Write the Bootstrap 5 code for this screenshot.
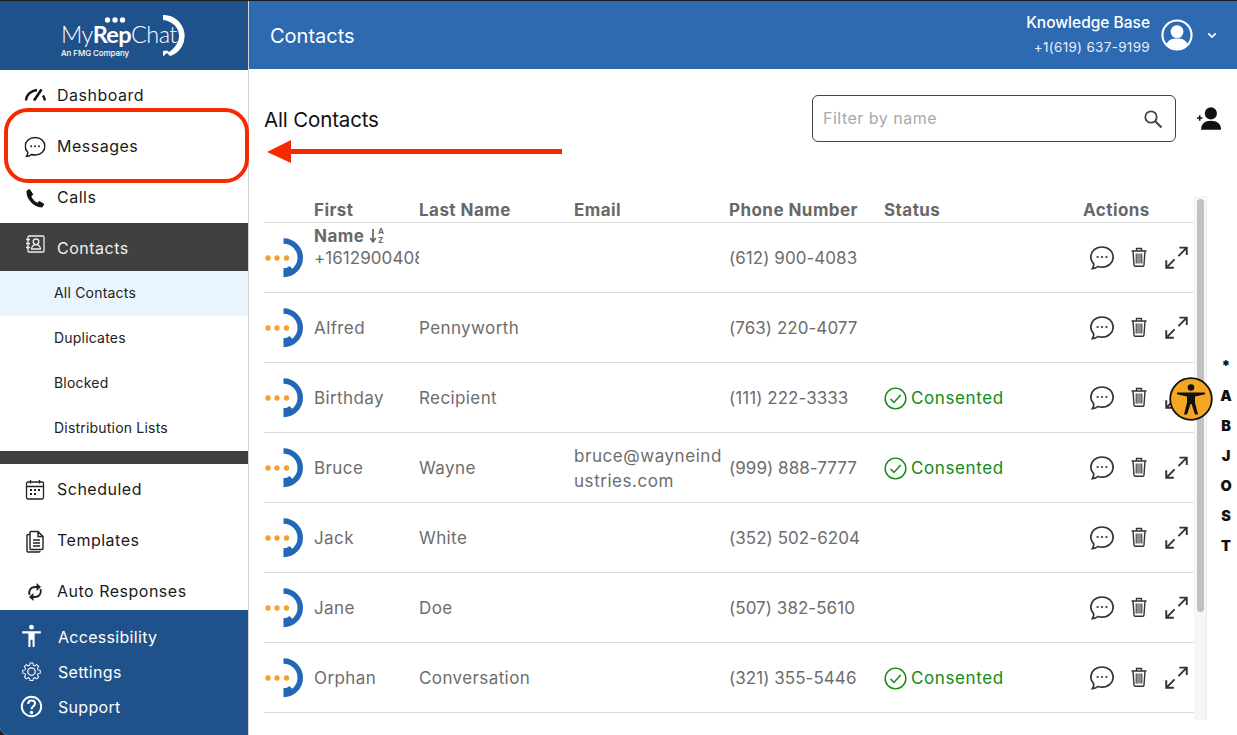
<!DOCTYPE html>
<html lang="en"><head><meta charset="utf-8"><title>Contacts</title>
<link href="https://cdn.jsdelivr.net/npm/bootstrap@5.3.0/dist/css/bootstrap.min.css" rel="stylesheet">
<style>
html,body{height:100%;overflow:hidden}
body{background:#1c1c1c;font-family:Inter,"Liberation Sans",sans-serif;padding-top:1px}
.shell{height:734px;background:#fff;border-bottom-left-radius:8px;position:relative;overflow:hidden}
.side{width:249px;flex:none;border-right:1px solid #d4d4d4}
.logo-area{height:69px;background:#1f518b;color:#fff;padding-left:61px}
.logo-block{width:111px;margin-top:7px;position:relative;flex:none}
.logo-dots{position:absolute;left:43px;top:-4px}
.logo-word{font-family:Lato,sans-serif;font-size:23.500px;font-weight:300;letter-spacing:-.6px;line-height:28px;white-space:nowrap}
.logo-word b{font-weight:700}
.logo-sub{font-size:8px;font-weight:500;line-height:9px;margin-top:1.500px;letter-spacing:-.1px}
.logo-arc{margin-left:-9px;flex:none}
.side-nav{height:540px;overflow:hidden}
.nav-line{height:51px;padding-left:23px;padding-bottom:2px;gap:10px;color:#1b1b1b;font-size:16px;letter-spacing:.5px;text-decoration:none}
.nav-line svg{width:24px;height:24px;flex:none;margin-top:2px}
.nav-cur{height:48px;background:#404040;color:#f1f1f1;padding-top:2px;padding-bottom:0}
.nav-cur svg{margin-top:-6px}
.sub-line{height:45px;padding-left:54px;padding-bottom:2px;font-size:14px;letter-spacing:.2px;color:#222;text-decoration:none}
.sub-cur{background:#e9f4fd}
.dark-strip{height:13px;background:#404040}
.side-foot{height:125px;background:#1f518b;padding-top:9px}
.foot-line{height:35px;padding-left:19px;gap:14px;color:#fff;font-size:16px;letter-spacing:.3px;text-decoration:none}
.foot-line svg{width:25px;height:25px;flex:none}
.top-bar{height:68px;background:#2d6ab1;color:#fff;padding:0 20px 0 21px}
.top-title{font-size:20px;font-weight:400;padding-top:2px}
.top-name{font-size:15.500px;font-weight:500;line-height:24px}
.top-phone{font-size:13.500px;line-height:24px;color:#e6eef7;letter-spacing:.3px}
.top-ava{margin-left:11px}
.top-caret{margin-left:14px}
.head-row{margin-top:26px;padding:0 15px;height:47px}
.page-title{font-size:20.500px;color:#111;margin:0;font-weight:400;letter-spacing:-.15px;padding-top:4px}
.find-box{width:364px;height:47px;border:1px solid #444;border-radius:6px;padding:0 12px 0 10px}
.find-box input{border:0;outline:0;flex:1;font:16px Inter,sans-serif;letter-spacing:.5px;min-width:0;background:transparent;padding:0 0 2px}
.find-box input::placeholder{color:#a9a9a9}
.add-btn{margin-left:20px}
.list-area{margin-top:54px;height:524px;overflow:hidden;padding-left:15px}
.list-wrap{width:930px;flex:none}
.ct{table-layout:fixed;width:930px;border-collapse:collapse;color:#6d6d6d;font-size:17px;letter-spacing:.4px}
.ct th{height:26px;vertical-align:top;border-bottom:1px solid #dcdcdc;font-weight:700;font-size:17px;color:#686868;letter-spacing:.45px;padding:0}
.ct th div{height:25px;line-height:26px;overflow:visible;padding-top:1px}
.ct td{height:70px;border-bottom:1px solid #dcdcdc;padding:2px 0 0;vertical-align:middle;line-height:25px}
.ct td.clip{overflow:hidden;white-space:nowrap}
.ct td.mail{word-break:break-all;padding:4px 0 0;letter-spacing:.55px}
.ct td.tel{letter-spacing:.05px;white-space:nowrap}
.ct td.av{padding-top:2px}
.ok{color:#128a12;gap:4px;letter-spacing:.6px}
.ok svg{width:23px;height:23px}
.ct td.acts{padding:1px 0 0 7px;color:#333}
.rail{width:13px;flex:none;background:#f6f6f6;border-right:1px solid #ececec;padding:3px 2px 0 3px}
.rail-thumb{height:413px;background:#c1c1c1;border-radius:4px}
.alpha{width:22px;margin-left:8px;font-weight:900;font-size:14.500px;color:#111;line-height:30px;text-align:center;padding-top:155px}
.note-ring{position:absolute;left:4px;top:107px;width:245px;height:75px;border:4px solid #f52a00;border-radius:24px}
.note-arrow{position:absolute;left:267px;top:138px}
.a11y{position:absolute;left:1169px;top:376px;width:44px;height:44px}
</style></head>
<body>
<svg width="0" height="0" class="position-absolute">
<symbol id="i-avatar" viewBox="0 0 40 40"><circle cx="4" cy="20" r="2.700" fill="#f5a02a"/><circle cx="13" cy="20" r="2.700" fill="#f5a02a"/><circle cx="22.500" cy="20" r="2.700" fill="#f5a02a"/><path d="M19.500 3A16.500 16.500 0 0 1 19.500 36.500" fill="none" stroke="#2367b7" stroke-width="5.500"/><path d="M19.500 30h3l3-2 3 3-5 3.500h-4z" fill="#2367b7"/></symbol>
<symbol id="i-chat" viewBox="0 0 24 24"><path d="M12 1C5.600 1 .8 5.400.8 11c0 2.700 1.100 5 2.900 6.800.2 1.700-.3 3.300-1.300 4.900 2.300-.2 4.200-1 5.500-2.200 1.300.4 2.700.6 4.100.6 6.400 0 11.200-4.500 11.200-10.100S18.400 1 12 1z" fill="none" stroke="currentColor" stroke-width="1.700"/><circle cx="7.600" cy="11" r="1.100" fill="currentColor"/><circle cx="12" cy="11" r="1.100" fill="currentColor"/><circle cx="16.400" cy="11" r="1.100" fill="currentColor"/></symbol>
<symbol id="i-trash" viewBox="0 0 16 20"><path d="M.5 4h15M5.500 3.800V1.500h5v2.300M2 4l1 14c0 .7.500 1.300 1.300 1.300h7.400c.8 0 1.300-.6 1.300-1.300l1-14" fill="none" stroke="currentColor" stroke-width="1.400"/><path d="M5.200 6.500v10M7 6.500v10M9 6.500v10M10.800 6.500v10" stroke="currentColor" stroke-width="1.100"/></symbol>
<symbol id="i-expand" viewBox="0 0 24 24"><path d="M14 10.500 22.500 2M15 1.700h7.700v7.700M10 14l-8.500 8.500M1.300 14.800v7.900h7.900" fill="none" stroke="currentColor" stroke-width="2"/></symbol>
<symbol id="i-check" viewBox="0 0 24 24"><circle cx="12" cy="12" r="10.800" fill="none" stroke="currentColor" stroke-width="1.500"/><path d="M6.800 12.500l3.600 3.600 7-7.800" fill="none" stroke="currentColor" stroke-width="1.600"/></symbol>
<symbol id="i-acts" viewBox="0 0 98 24"><use href="#i-chat" width="24" height="24" x="0" y="0"/><use href="#i-trash" width="16" height="20" x="41" y="1"/><use href="#i-expand" width="23" height="23" x="75" y="0"/></symbol>
</svg>
<div class="shell d-flex">
<aside class="side d-flex flex-column">
  <div class="logo-area d-flex align-items-center">
    <div class="logo-block">
      <svg class="logo-dots" width="22" height="8" viewBox="0 0 22 8"><circle cx="3.500" cy="4" r="2.700" fill="#fff"/><circle cx="11" cy="4" r="2.700" fill="#fff"/><circle cx="18.500" cy="4" r="2.700" fill="#fff"/></svg>
      <div class="logo-word">My<b>Rep</b>Chat</div>
      <div class="logo-sub">An FMG Company</div>
    </div>
    <svg class="logo-arc" width="23" height="42" viewBox="0 0 23 42"><path d="M0 0A21 21 0 0 1 7 41l-3-3-4 3.500V36l4-.5 2 1.500C12 33 16 27 16 21 16 12 9 6 0 5z" fill="#fff"/></svg>
  </div>
  <nav class="side-nav">
    <a class="nav-line d-flex align-items-center" href="#"><svg viewBox="0 0 24 24" fill="none" stroke="#111" stroke-width="2.300"><path d="M3 16.500C3 11 8 6.500 14 6"/><path d="M11 16.500 18.500 5.500" stroke-width="2.600"/><path d="M20 11.500c1 1.500 1.500 3 2 5"/></svg><span>Dashboard</span></a>
    <a class="nav-line d-flex align-items-center" href="#"><svg viewBox="0 0 24 24" color="#1b1b1b"><g transform="translate(1.500 1.500) scale(.88)"><use href="#i-chat" width="24" height="24"/></g></svg><span>Messages</span></a>
    <a class="nav-line d-flex align-items-center" href="#"><svg viewBox="0 0 24 24"><path d="M6.500 3.500 4 5c-.6 7.500 6.500 16 15.200 16l1.500-3-4.400-2.500-2 1.700c-2.800-1-5.500-4.500-6.500-7l2-1.700z" fill="#111" stroke="#111" stroke-width="1" stroke-linejoin="round"/></svg><span>Calls</span></a>
    <a class="nav-line nav-cur d-flex align-items-center" href="#"><svg viewBox="0 0 24 24" fill="none" stroke="#eee" stroke-width="1.300"><rect x="5" y="3" width="16" height="16" rx="1"/><circle cx="13" cy="8.800" r="2.800"/><path d="M8.500 16c.5-3 2-4.300 4.500-4.300s4 1.300 4.500 4.300zM3 6.500h4M3 10.500h4M3 14.500h4"/></svg><span>Contacts</span></a>
    <a class="sub-line sub-cur d-flex align-items-center" href="#">All Contacts</a>
    <a class="sub-line d-flex align-items-center" href="#">Duplicates</a>
    <a class="sub-line d-flex align-items-center" href="#">Blocked</a>
    <a class="sub-line d-flex align-items-center" href="#">Distribution Lists</a>
    <div class="dark-strip"></div>
    <a class="nav-line d-flex align-items-center" href="#"><svg viewBox="0 0 24 24" fill="none" stroke="#222" stroke-width="1.300"><rect x="3.500" y="4" width="17" height="17" rx="1.500"/><path d="M3.500 8.500h17M7.500 2v3.500M16.500 2v3.500"/><path d="M7 12h2M11 12h2M15 12h2M7 16h2M11 16h2" stroke-width="1.800"/></svg><span>Scheduled</span></a>
    <a class="nav-line d-flex align-items-center" href="#"><svg viewBox="0 0 24 24" fill="none" stroke="#222" stroke-width="1.400"><path d="M8 2.500h7l5 5v12c0 .7-.5 1-1 1H8c-.5 0-1-.3-1-1V3.500c0-.7.500-1 1-1zM15 2.500v5h5M10 11h7M10 14h7M10 17h7"/><path d="M7 5.500H5c-.5 0-1 .3-1 1V22c0 .7.500 1 1 1h11c.6 0 1-.4 1-1"/></svg><span>Templates</span></a>
    <a class="nav-line d-flex align-items-center" href="#"><svg viewBox="0 0 24 24" fill="none" stroke="#222" stroke-width="1.900"><path d="M6.500 15C5.300 11 7.500 7 12 7h2"/><path d="M17.500 9C18.700 13 16.500 17 12 17h-2"/><path d="M13.500 3l4.500 4-4.500 4z M10.500 13 6 17l4.500 4z" fill="#222" stroke="none"/></svg><span>Auto Responses</span></a>
  </nav>
  <div class="side-foot">
    <a class="foot-line d-flex align-items-center" href="#"><svg viewBox="0 0 24 24" fill="#fff"><circle cx="12" cy="3" r="2.300"/><path d="M3 7h18v2.200H15V22h-2v-7h-2v7H9V9.200H3z"/></svg><span>Accessibility</span></a>
    <a class="foot-line d-flex align-items-center" href="#"><svg viewBox="0 0 24 24" fill="none" stroke="#fff" stroke-width="1.200"><circle cx="12" cy="12" r="3.600"/><path d="M10.300 2.500h3.400l.5 2.700 1.700.7 2.300-1.500 2.400 2.400-1.500 2.300.7 1.700 2.700.5v3.400l-2.700.5-.7 1.700 1.500 2.300-2.400 2.400-2.300-1.500-1.700.7-.5 2.700h-3.400l-.5-2.700-1.700-.7-2.300 1.500-2.400-2.400 1.500-2.300-.7-1.700-2.700-.5v-3.400l2.700-.5.7-1.700-1.500-2.300 2.400-2.400 2.300 1.500 1.700-.7z" transform="translate(12 12) scale(.8) translate(-12 -12.700)"/></svg><span>Settings</span></a>
    <a class="foot-line d-flex align-items-center" href="#"><svg viewBox="0 0 24 24" fill="none" stroke="#fff" stroke-width="1.900"><circle cx="12" cy="12" r="9.300"/><path d="M8.800 9.500c0-2 1.400-3.300 3.300-3.300 2 0 3.300 1.300 3.300 3 0 2.800-3.400 2.600-3.400 5.500" /><circle cx="12" cy="17.800" r=".7" fill="#fff"/></svg><span>Support</span></a>
  </div>
</aside>
<main class="flex-grow-1 d-flex flex-column" style="min-width:0">
  <header class="top-bar d-flex align-items-center justify-content-between">
    <div class="top-title">Contacts</div>
    <div class="d-flex align-items-center">
      <div class="text-end"><div class="top-name">Knowledge Base</div><div class="top-phone">+1(619) 637-9199</div></div>
      <svg class="top-ava" width="32" height="32" viewBox="0 0 33 33"><circle cx="16.500" cy="16.500" r="15" fill="none" stroke="#fff" stroke-width="2.200"/><circle cx="16.500" cy="13" r="6.600" fill="#fff"/><path d="M5.500 26.500c1-4.500 5-6.500 11-6.500s10 2 11 6.500c-3 3-7 4.500-11 4.500s-8-1.500-11-4.500z" fill="#fff"/></svg>
      <svg class="top-caret" width="10" height="7" viewBox="0 0 12 8"><path d="M1.500 1.500 6 6l4.500-4.500" fill="none" stroke="#fff" stroke-width="2"/></svg>
    </div>
  </header>
  <div class="head-row d-flex align-items-center">
    <h1 class="page-title flex-grow-1">All Contacts</h1>
    <div class="find-box d-flex align-items-center">
      <input type="text" placeholder="Filter by name" aria-label="Filter by name">
      <svg width="20" height="20" viewBox="0 0 20 20"><circle cx="8" cy="8" r="5.700" fill="none" stroke="#444" stroke-width="1.800"/><path d="m12.500 12.500 6 6" stroke="#444" stroke-width="2.200"/></svg>
    </div>
    <svg class="add-btn" width="26" height="25" viewBox="0 0 28 26"><circle cx="16" cy="7.500" r="6.500" fill="#111"/><path d="M5.500 25c0-6.500 4-9.500 10.500-9.500S27 18.500 27 25z" fill="#111"/><path d="M1 12.500h6M4 9.500v6" stroke="#111" stroke-width="1.700"/></svg>
  </div>
  <div class="list-area d-flex">
    <div class="list-wrap">
      <table class="ct">
        <colgroup><col style="width:50px"><col style="width:105px"><col style="width:155px"><col style="width:155px"><col style="width:155px"><col style="width:199px"><col></colgroup>
        <thead><tr><th></th><th><div>First<br>Name <svg width="17" height="17" viewBox="0 0 17 17" style="vertical-align:-2px"><path d="M4 2v12M1.200 11 4 14.800 6.800 11" fill="none" stroke="#686868" stroke-width="1.700"/><text x="9" y="7" font-size="8" font-weight="700" fill="#686868" letter-spacing="0">A</text><text x="9" y="15.500" font-size="8" font-weight="700" fill="#686868" letter-spacing="0">Z</text></svg></div></th><th><div>Last Name</div></th><th><div>Email</div></th><th><div>Phone Number</div></th><th><div>Status</div></th><th><div>Actions</div></th></tr></thead>
        <tbody>
        <tr><td class="av"><svg width="40" height="40"><use href="#i-avatar"/></svg></td><td class="clip tel">+16129004083</td><td></td><td></td><td class="tel">(612) 900-4083</td><td></td><td class="acts"><svg class="d-block" width="98" height="24"><use href="#i-acts"/></svg></td></tr>
        <tr><td class="av"><svg width="40" height="40"><use href="#i-avatar"/></svg></td><td>Alfred</td><td>Pennyworth</td><td></td><td class="tel">(763) 220-4077</td><td></td><td class="acts"><svg class="d-block" width="98" height="24"><use href="#i-acts"/></svg></td></tr>
        <tr><td class="av"><svg width="40" height="40"><use href="#i-avatar"/></svg></td><td>Birthday</td><td>Recipient</td><td></td><td class="tel">(111) 222-3333</td><td><div class="ok d-flex align-items-center"><svg><use href="#i-check"/></svg>Consented</div></td><td class="acts"><svg class="d-block" width="98" height="24"><use href="#i-acts"/></svg></td></tr>
        <tr><td class="av"><svg width="40" height="40"><use href="#i-avatar"/></svg></td><td>Bruce</td><td>Wayne</td><td class="mail">bruce@wayneindustries.com</td><td class="tel">(999) 888-7777</td><td><div class="ok d-flex align-items-center"><svg><use href="#i-check"/></svg>Consented</div></td><td class="acts"><svg class="d-block" width="98" height="24"><use href="#i-acts"/></svg></td></tr>
        <tr><td class="av"><svg width="40" height="40"><use href="#i-avatar"/></svg></td><td>Jack</td><td>White</td><td></td><td class="tel">(352) 502-6204</td><td></td><td class="acts"><svg class="d-block" width="98" height="24"><use href="#i-acts"/></svg></td></tr>
        <tr><td class="av"><svg width="40" height="40"><use href="#i-avatar"/></svg></td><td>Jane</td><td>Doe</td><td></td><td class="tel">(507) 382-5610</td><td></td><td class="acts"><svg class="d-block" width="98" height="24"><use href="#i-acts"/></svg></td></tr>
        <tr><td class="av"><svg width="40" height="40"><use href="#i-avatar"/></svg></td><td>Orphan</td><td>Conversation</td><td></td><td class="tel">(321) 355-5446</td><td><div class="ok d-flex align-items-center"><svg><use href="#i-check"/></svg>Consented</div></td><td class="acts"><svg class="d-block" width="98" height="24"><use href="#i-acts"/></svg></td></tr>
        </tbody>
      </table>
    </div>
    <div class="rail"><div class="rail-thumb"></div></div>
    <div class="alpha"><div>*</div><div>A</div><div>B</div><div>J</div><div>O</div><div>S</div><div>T</div></div>
  </div>
</main>
<div class="note-ring"></div>
<svg class="note-arrow" width="296" height="26" viewBox="0 0 296 26"><path d="M0 13 24 1v9h271v5H24v9z" fill="#f52a00"/></svg>
<svg class="a11y" viewBox="0 0 44 44"><circle cx="22" cy="22" r="20.800" fill="#f5a623" stroke="#111" stroke-width="1.800"/><circle cx="22" cy="10.500" r="3.300" fill="#111"/><path d="M8 15.500h28v1.700l-10 2.300v6l3 12h-3l-3.500-10.500h-1L18 37.500h-3l3-12v-6L8 17.200z" fill="#111"/></svg>
</div>
</body></html>
